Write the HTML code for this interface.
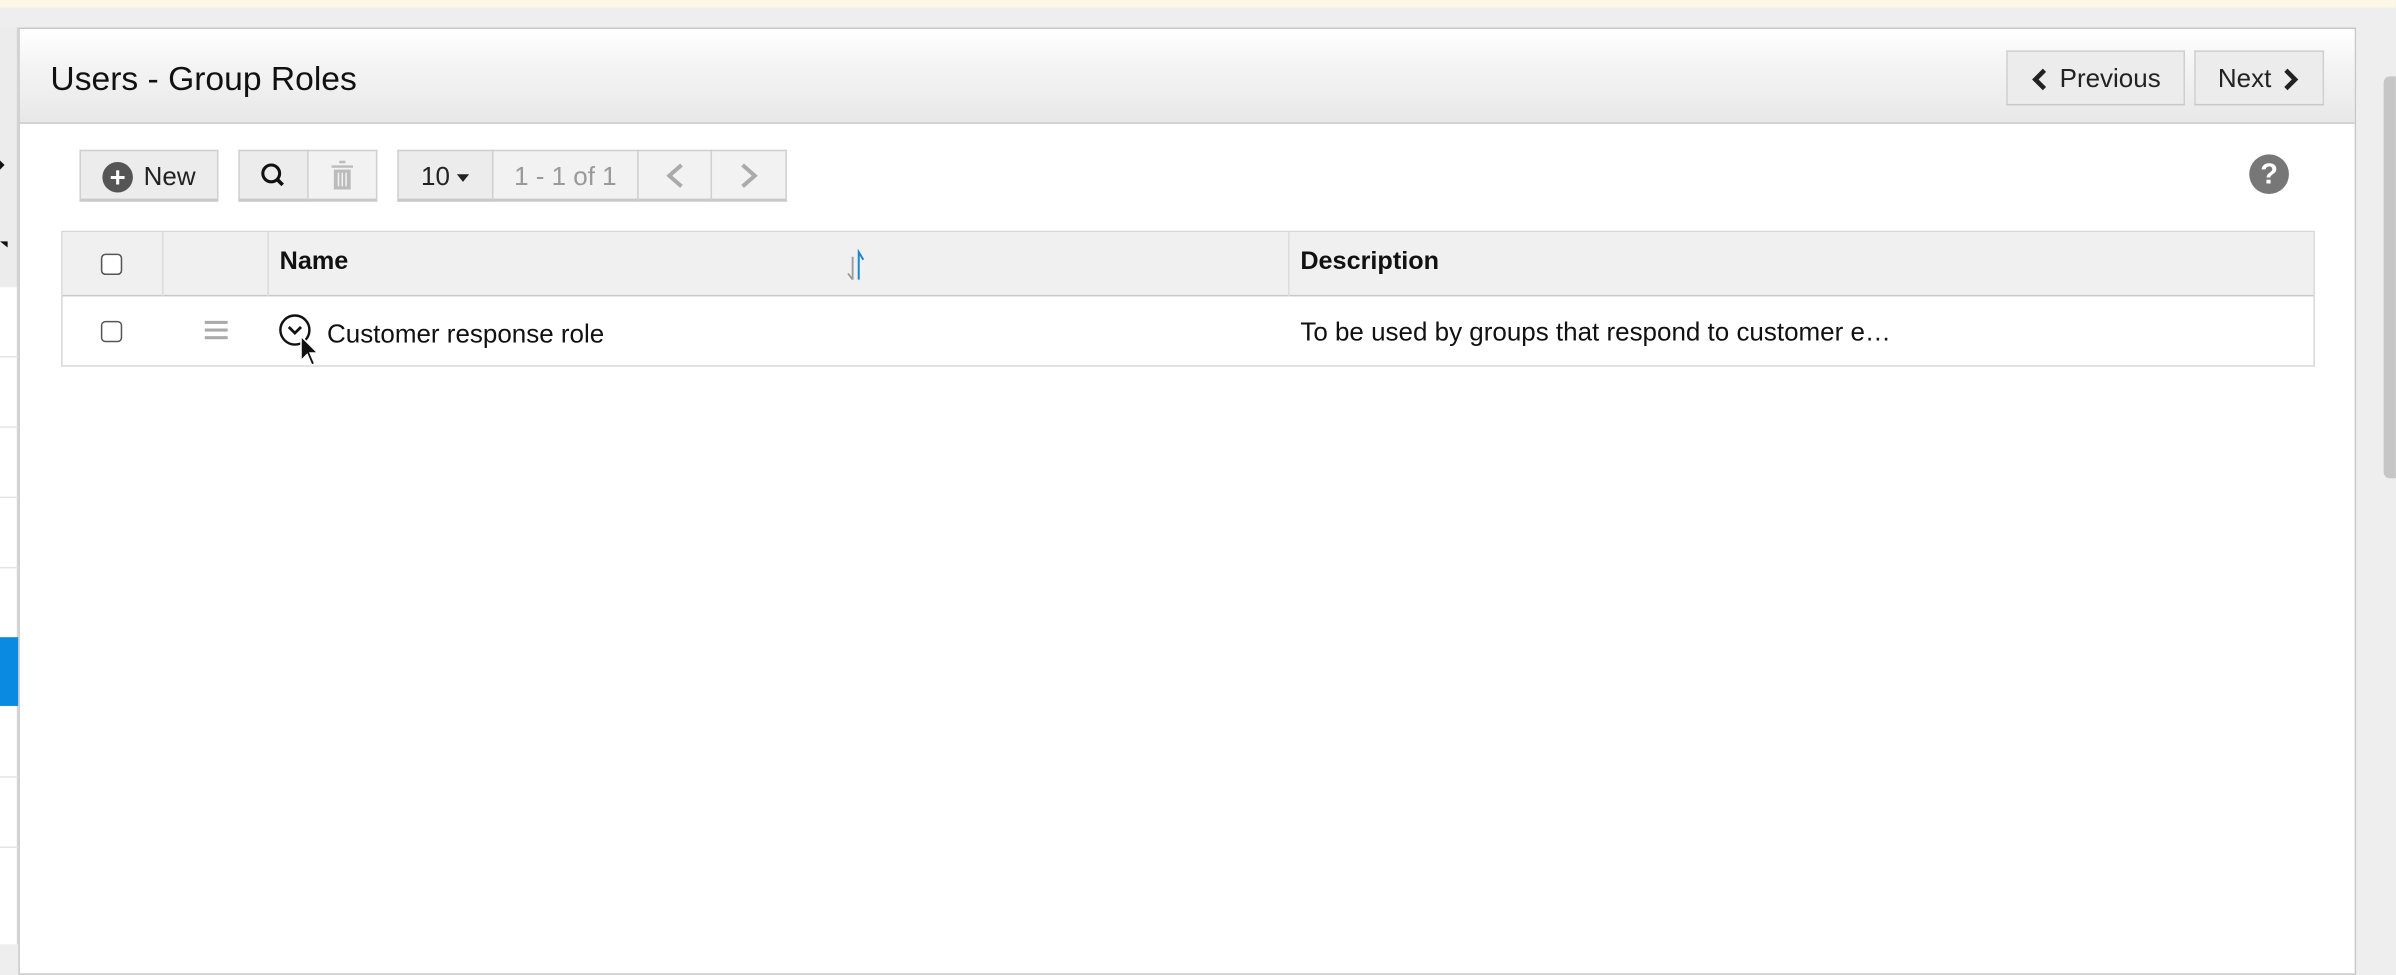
<!DOCTYPE html>
<html><head><meta charset="utf-8"><style>
html,body{margin:0;padding:0;width:2396px;height:904px;overflow:hidden;background:#eee;font-family:"Liberation Sans",Arial,sans-serif;}
#w{position:absolute;left:0;top:0;width:1568px;height:592px;transform:scale(1.528);transform-origin:0 0;}
.a{position:absolute;box-sizing:border-box;}
.btn{position:absolute;box-sizing:border-box;background:#ececec;border:1px solid #d0d0d0;border-bottom:2px solid #c8c8c8;display:flex;align-items:center;justify-content:center;font-size:16px;color:#222;}
.cb{position:absolute;width:14px;height:14px;border:1.3px solid #555;border-radius:3px;box-sizing:border-box;background:#fff;}
</style></head><body><div id="w">
<div class="a" style="left:0;top:0;width:1568px;height:5px;background:#fcf7e6"></div>
<!-- sidebar -->
<div class="a" style="left:0;top:18px;width:12px;height:600px;background:#fff;border-right:1px solid #d4d4d4"></div>
<div class="a" style="left:0;top:18px;width:12px;height:170px;background:#ececec;border-right:1px solid #d4d4d4"></div>
<div class="a" style="left:0;top:105px;width:0;height:0;border-left:3px solid #111;border-top:3px solid transparent;border-bottom:3px solid transparent"></div>
<div class="a" style="left:0;top:158px;width:0;height:0;border-top:4px solid #111;border-left:5px solid transparent"></div>
<div class="a" style="left:0;top:233px;width:12px;height:1px;background:#e4e4e4"></div>
<div class="a" style="left:0;top:279px;width:12px;height:1px;background:#e4e4e4"></div>
<div class="a" style="left:0;top:325px;width:12px;height:1px;background:#e4e4e4"></div>
<div class="a" style="left:0;top:371px;width:12px;height:1px;background:#e4e4e4"></div>
<div class="a" style="left:0;top:417px;width:12px;height:45px;background:#0a8ae0"></div>
<div class="a" style="left:0;top:508px;width:12px;height:1px;background:#e4e4e4"></div>
<div class="a" style="left:0;top:554px;width:12px;height:1px;background:#e4e4e4"></div>
<!-- scrollbar -->
<div class="a" style="left:1560px;top:50px;width:8px;height:263px;background:#c6c6c6;border-radius:4px 0 0 4px"></div>
<!-- panel -->
<div class="a" style="left:12px;top:18px;width:1530px;height:620px;background:#fff;border:1px solid #c8c8c8"></div>
<div class="a" style="left:13px;top:19px;width:1528px;height:62px;background:linear-gradient(#fff,#f4f4f4 40%,#e8e8e8);border-bottom:1px solid #c8c8c8"></div>
<div class="a" style="left:33px;top:39px;font-size:22px;color:#111;">Users - Group Roles</div>
<div class="btn" style="left:1313px;top:33px;width:117px;height:36px;border-bottom-width:1px;padding-top:2px;font-size:17px"><svg width="12" height="16" viewBox="0 0 12 16" style="margin-right:7px"><path d="M9 2L3 8l6 6" fill="none" stroke="#222" stroke-width="3"/></svg>Previous</div>
<div class="btn" style="left:1436px;top:33px;width:85px;height:36px;border-bottom-width:1px;padding-top:2px;font-size:17px">Next<svg width="12" height="16" viewBox="0 0 12 16" style="margin-left:7px"><path d="M3 2l6 6-6 6" fill="none" stroke="#222" stroke-width="3"/></svg></div>
<!-- toolbar -->
<div class="btn" style="left:52px;top:98px;width:91px;height:34px;padding-top:2px;font-size:17px"><span style="width:20px;height:20px;border-radius:50%;background:#555;color:#fff;display:inline-flex;align-items:center;justify-content:center;font-size:18px;font-weight:bold;margin-right:7px;line-height:1">+</span>New</div>
<div class="btn" style="left:156px;top:98px;width:46px;height:34px"><svg width="18" height="18" viewBox="0 0 18 18"><circle cx="7.5" cy="7.5" r="5.5" fill="none" stroke="#111" stroke-width="2"/><path d="M11.5 11.5L15 15" stroke="#111" stroke-width="2.4"/></svg></div>
<div class="btn" style="left:201px;top:98px;width:46px;height:34px;background:#f2f2f2"><svg width="16" height="20" viewBox="0 0 16 20"><path d="M6 1h4M1 4h14" stroke="#bbb" stroke-width="1.6"/><rect x="2.5" y="6" width="11" height="13" fill="#bbb"/><path d="M5.5 8v9M8 8v9M10.5 8v9" stroke="#f2f2f2" stroke-width="1"/></svg></div>
<div class="btn" style="left:260px;top:98px;width:63px;height:34px;padding-top:2px;font-size:17px">10<span style="border-top:5px solid #222;border-left:4px solid transparent;border-right:4px solid transparent;margin-left:5px;margin-top:2px"></span></div>
<div class="btn" style="left:322px;top:98px;width:96px;height:34px;background:#f2f2f2;color:#999;padding-top:2px;font-size:17px">1 - 1 of 1</div>
<div class="btn" style="left:417px;top:98px;width:49px;height:34px;background:#f2f2f2"><svg width="14" height="18" viewBox="0 0 14 18"><path d="M11 2L3 9l8 7" fill="none" stroke="#aaa" stroke-width="2.6"/></svg></div>
<div class="btn" style="left:465px;top:98px;width:50px;height:34px;background:#f2f2f2"><svg width="14" height="18" viewBox="0 0 14 18"><path d="M3 2l8 7-8 7" fill="none" stroke="#aaa" stroke-width="2.6"/></svg></div>
<div class="a" style="left:1472px;top:101px;width:26px;height:26px;border-radius:50%;background:#777;color:#fff;font-weight:bold;font-size:19px;text-align:center;line-height:27px">?</div>
<!-- table -->
<div class="a" style="left:40px;top:151px;width:1475px;height:89px;border:1px solid #d8d8d8"></div>
<div class="a" style="left:41px;top:152px;width:1473px;height:42px;background:#f0f0f0;border-bottom:1px solid #c8c8c8"></div>
<div class="a" style="left:106px;top:152px;width:1px;height:42px;background:#dcdcdc"></div>
<div class="a" style="left:175px;top:152px;width:1px;height:42px;background:#dcdcdc"></div>
<div class="a" style="left:843px;top:152px;width:1px;height:42px;background:#dcdcdc"></div>
<div class="cb" style="left:66px;top:166px"></div>
<div class="cb" style="left:66px;top:210px"></div>
<div class="a" style="left:183px;top:162px;font-size:16.5px;font-weight:bold;color:#111">Name</div>
<div class="a" style="left:851px;top:162px;font-size:16.5px;font-weight:bold;color:#111">Description</div>
<svg class="a" style="left:552px;top:163px" width="18" height="22" viewBox="0 0 18 22"><path d="M6 5v15M3 16l3 4" fill="none" stroke="#999" stroke-width="1.2"/><path d="M10 20V2l3 5" fill="none" stroke="#1a86d0" stroke-width="1.3"/></svg>
<div class="a" style="left:134px;top:210px;width:15px;height:2px;background:#aaa;box-shadow:0 5px 0 #aaa,0 10px 0 #aaa"></div>
<svg class="a" style="left:182px;top:205px" width="22" height="22" viewBox="0 0 22 22"><circle cx="11" cy="11" r="9.5" fill="#fff" stroke="#111" stroke-width="1.6"/><path d="M7 9l4 4 4-4" fill="none" stroke="#111" stroke-width="1.8"/></svg>
<svg class="a" style="left:196px;top:219px" width="14" height="22" viewBox="0 0 14 22"><path d="M1 1v16l4-4 3 7 2-1-3-7h5z" fill="#111" stroke="#fff" stroke-width="1"/></svg>
<div class="a" style="left:214px;top:209px;font-size:17px;color:#111">Customer response role</div>
<div class="a" style="left:851px;top:208px;font-size:17px;color:#111">To be used by groups that respond to customer e…</div>
</div></body></html>
